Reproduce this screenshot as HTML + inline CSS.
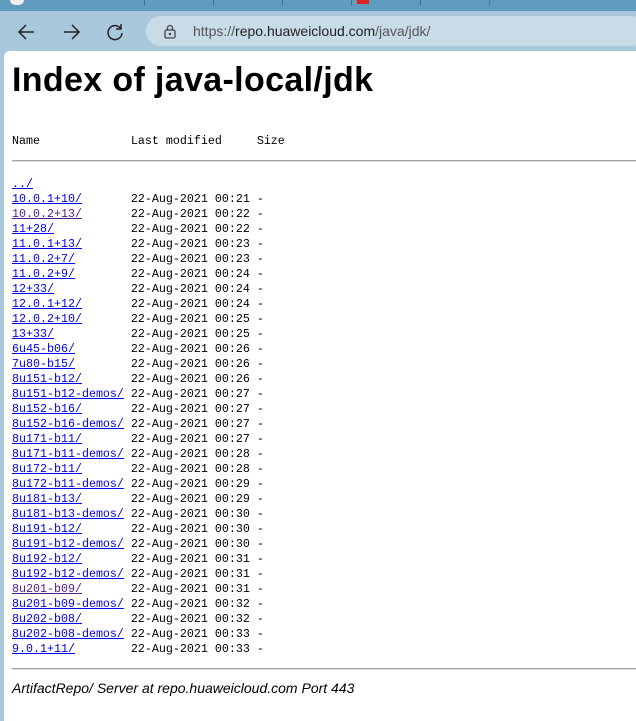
<!DOCTYPE html>
<html><head><meta charset="utf-8"><style>
html,body{margin:0;padding:0;width:636px;height:714px;overflow:hidden;background:#a9c8dc;font-family:"Liberation Sans",sans-serif}
.tabs{position:absolute;left:0;top:0;width:636px;height:11px;background:#5f9cc0}
.tabs i{position:absolute;top:0;width:1px;height:5px;background:#3d6f8f}
.tb{position:absolute;left:0;top:11px;width:636px;height:40px;background:#a9c8dc}
.url{position:absolute;left:146px;top:16px;width:500px;height:30px;border-radius:15px;background:#c8dce8}
.url span{position:absolute;left:47px;top:7px;font-size:14px;color:#222}
.url span b{font-weight:normal;color:#555}
.page{position:absolute;left:4px;top:51px;width:640px;height:670px;background:#fff;border-top-left-radius:6px}
h1{position:absolute;left:8px;top:10px;margin:0;font-size:34px;font-weight:bold;color:#000;letter-spacing:0.35px}
pre{position:absolute;left:8px;margin:0;font-family:"Liberation Mono",monospace;font-size:11.67px;line-height:15px;color:#000}
a{color:#0000ee}a.v{color:#551a8b}
.hr{position:absolute;left:8px;width:632px;height:1px;background:#a0a0a0;border-bottom:1px solid #e0e0e0}
.ft{position:absolute;left:8px;top:629px;font-style:italic;font-size:14px;color:#000}
</style></head><body>
<div class="tabs"><i style="left:144px"></i><i style="left:213px"></i><i style="left:282px"></i><i style="left:351px"></i><i style="left:420px"></i><i style="left:489px"></i><div style="position:absolute;left:357px;top:0;width:12px;height:4px;background:#d22"></div><div style="position:absolute;left:10px;top:0;width:14px;height:5px;background:#eee;border-radius:0 0 7px 7px"></div></div>
<div class="tb">
<svg style="position:absolute;left:16px;top:10px" width="22" height="22" viewBox="0 0 22 22" fill="none" stroke="#222" stroke-width="1.5"><path d="M18 11H4M10 4L3 11L10 18"/></svg>
<svg style="position:absolute;left:60px;top:10px" width="22" height="22" viewBox="0 0 22 22" fill="none" stroke="#222" stroke-width="1.5"><path d="M4 11H18M12 4L19 11L12 18"/></svg>
<svg style="position:absolute;left:104px;top:10px" width="22" height="22" viewBox="0 0 22 22" fill="none" stroke="#222" stroke-width="1.5"><path d="M17 8A7 7 0 1 0 18 12M17 3V8H12"/></svg>
</div>
<div class="url"><svg style="position:absolute;left:17px;top:8px" width="14" height="15" viewBox="0 0 14 15" fill="none" stroke="#444" stroke-width="1.3"><rect x="2" y="6" width="10" height="8" rx="1.5"/><path d="M4.5 6V4a2.5 2.5 0 0 1 5 0v2"/><circle cx="7" cy="10" r=".6" fill="#444"/></svg><span><b>https://</b>repo.huaweicloud.com<b>/java/jdk/</b></span></div>
<div class="page">
<h1>Index of java-local/jdk</h1>
<pre style="top:83px">Name             Last modified     Size</pre>
<div class="hr" style="top:109px"></div>
<pre style="top:126px"><a href="#">../</a>
<a href="#">10.0.1+10/</a>       22-Aug-2021 00:21 -
<a class="v" href="#">10.0.2+13/</a>       22-Aug-2021 00:22 -
<a href="#">11+28/</a>           22-Aug-2021 00:22 -
<a href="#">11.0.1+13/</a>       22-Aug-2021 00:23 -
<a href="#">11.0.2+7/</a>        22-Aug-2021 00:23 -
<a href="#">11.0.2+9/</a>        22-Aug-2021 00:24 -
<a href="#">12+33/</a>           22-Aug-2021 00:24 -
<a href="#">12.0.1+12/</a>       22-Aug-2021 00:24 -
<a href="#">12.0.2+10/</a>       22-Aug-2021 00:25 -
<a href="#">13+33/</a>           22-Aug-2021 00:25 -
<a href="#">6u45-b06/</a>        22-Aug-2021 00:26 -
<a href="#">7u80-b15/</a>        22-Aug-2021 00:26 -
<a href="#">8u151-b12/</a>       22-Aug-2021 00:26 -
<a href="#">8u151-b12-demos/</a> 22-Aug-2021 00:27 -
<a href="#">8u152-b16/</a>       22-Aug-2021 00:27 -
<a href="#">8u152-b16-demos/</a> 22-Aug-2021 00:27 -
<a href="#">8u171-b11/</a>       22-Aug-2021 00:27 -
<a href="#">8u171-b11-demos/</a> 22-Aug-2021 00:28 -
<a href="#">8u172-b11/</a>       22-Aug-2021 00:28 -
<a href="#">8u172-b11-demos/</a> 22-Aug-2021 00:29 -
<a href="#">8u181-b13/</a>       22-Aug-2021 00:29 -
<a href="#">8u181-b13-demos/</a> 22-Aug-2021 00:30 -
<a href="#">8u191-b12/</a>       22-Aug-2021 00:30 -
<a href="#">8u191-b12-demos/</a> 22-Aug-2021 00:30 -
<a href="#">8u192-b12/</a>       22-Aug-2021 00:31 -
<a href="#">8u192-b12-demos/</a> 22-Aug-2021 00:31 -
<a class="v" href="#">8u201-b09/</a>       22-Aug-2021 00:31 -
<a href="#">8u201-b09-demos/</a> 22-Aug-2021 00:32 -
<a href="#">8u202-b08/</a>       22-Aug-2021 00:32 -
<a href="#">8u202-b08-demos/</a> 22-Aug-2021 00:33 -
<a href="#">9.0.1+11/</a>        22-Aug-2021 00:33 -</pre>
<div class="hr" style="top:617px"></div>
<div class="ft">ArtifactRepo/ Server at repo.huaweicloud.com Port 443</div>
</div>
</body></html>
